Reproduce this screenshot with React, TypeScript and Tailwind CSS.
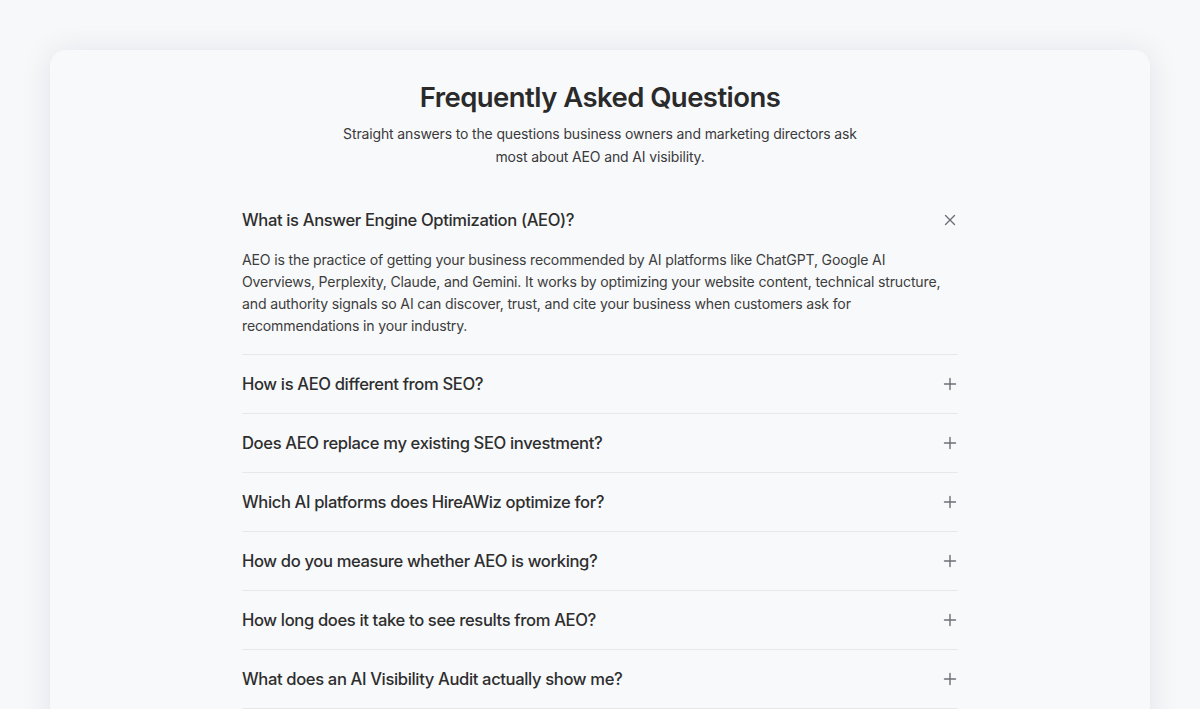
import React from "react";

const faqs = [
  {
    q: "What is Answer Engine Optimization (AEO)?",
    a: "AEO is the practice of getting your business recommended by AI platforms like ChatGPT, Google AI Overviews, Perplexity, Claude, and Gemini. It works by optimizing your website content, technical structure, and authority signals so AI can discover, trust, and cite your business when customers ask for recommendations in your industry.",
  },
  { q: "How is AEO different from SEO?" },
  { q: "Does AEO replace my existing SEO investment?" },
  { q: "Which AI platforms does HireAWiz optimize for?" },
  { q: "How do you measure whether AEO is working?" },
  { q: "How long does it take to see results from AEO?" },
  { q: "What does an AI Visibility Audit actually show me?" },
];

function PlusIcon() {
  return (
    <svg width="14" height="14" viewBox="0 0 14 14" fill="none" stroke="#6b6f76" strokeWidth="1.4" strokeLinecap="round">
      <path d="M7 1.5v11M1.5 7h11" />
    </svg>
  );
}

function CloseIcon() {
  return (
    <svg width="14" height="14" viewBox="0 0 14 14" fill="none" stroke="#6b6f76" strokeWidth="1.4" strokeLinecap="round">
      <path d="M2.5 2.5l9 9M11.5 2.5l-9 9" />
    </svg>
  );
}

export default function App() {
  return (
    <div
      className="min-h-[709px] bg-[#f7f8fa] px-[50px] pt-[50px] pb-10"
      style={{ fontFamily: "Inter, 'Noto Sans', sans-serif" }}
    >
      <div className="rounded-2xl bg-[#f8f9fb] shadow-[0_2px_32px_rgba(20,24,40,0.09)] pt-[30px] pb-24">
        <div className="text-center">
          <h2 className="text-[27.5px] leading-[34px] font-semibold text-[#2a2a2a] tracking-[-0.02em]">
            Frequently Asked Questions
          </h2>
          <p className="mx-auto mt-2 max-w-[530px] text-[14px] leading-[23px] text-[#3a3a3a] tracking-[-0.01em]">
            Straight answers to the questions business owners and marketing directors ask most about AEO and AI visibility.
          </p>
        </div>
        <div className="mx-auto mt-[23px] w-[716px]">
          {faqs.map((f, i) => (
            <div key={i} className="border-b border-[#e6e8ec]">
              <div className="flex items-center justify-between py-[18px]">
                <span className="text-[16.6px] leading-[22px] font-medium text-[#2e2e2e] tracking-[-0.022em]">
                  {f.q}
                </span>
                <span className="mr-[1px] flex h-[22px] w-[14px] items-center justify-center">
                  {f.a ? <CloseIcon /> : <PlusIcon />}
                </span>
              </div>
              {f.a && (
                <p className="pb-[17px] text-[14.1px] leading-[22px] text-[#3d3d3d] tracking-[-0.012em]">
                  {f.a}
                </p>
              )}
            </div>
          ))}
        </div>
      </div>
    </div>
  );
}
